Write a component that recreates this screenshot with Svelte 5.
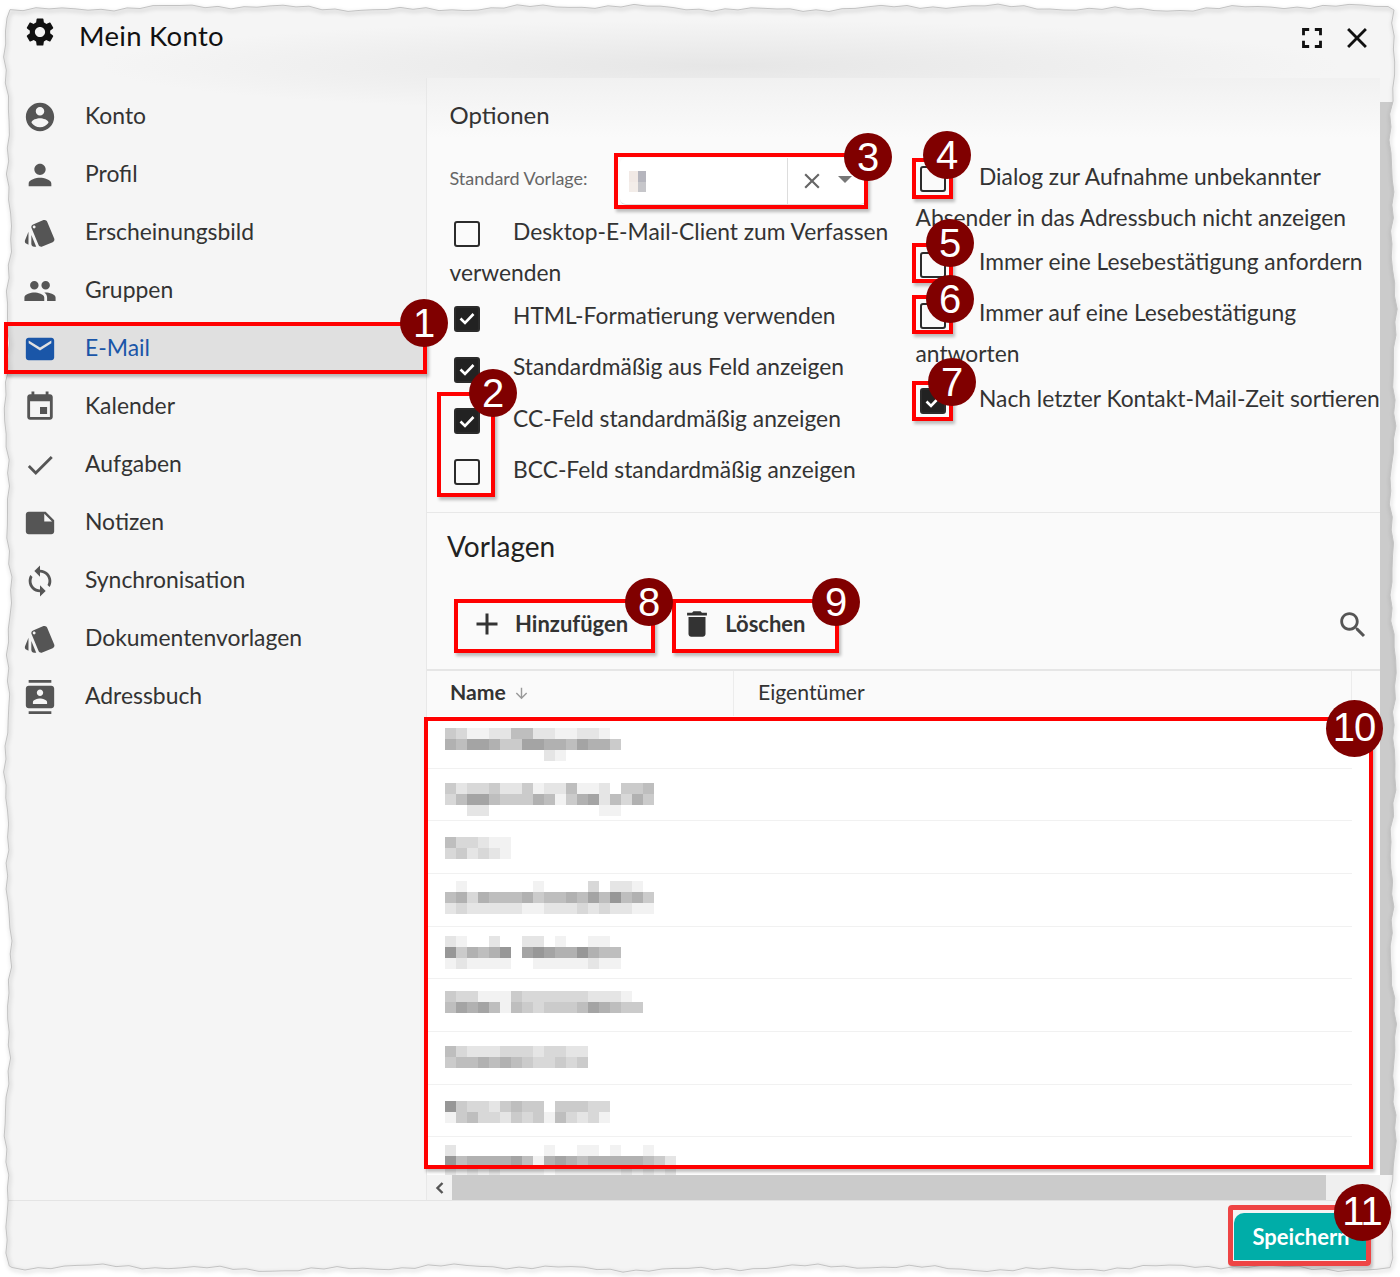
<script>
  const icons = {
    gear: 'M19.14 12.94c.04-.3.06-.61.06-.94 0-.32-.02-.64-.07-.94l2.03-1.58a.49.49 0 0 0 .12-.61l-1.92-3.32a.488.488 0 0 0-.59-.22l-2.39.96c-.5-.38-1.03-.7-1.62-.94l-.36-2.54a.484.484 0 0 0-.48-.41h-3.84c-.24 0-.43.17-.47.41l-.36 2.54c-.59.24-1.13.57-1.62.94l-2.39-.96c-.22-.08-.47 0-.59.22L2.74 8.87c-.12.21-.08.47.12.61l2.03 1.58c-.05.3-.09.63-.09.94s.02.64.07.94l-2.03 1.58a.49.49 0 0 0-.12.61l1.92 3.32c.12.22.37.29.59.22l2.39-.96c.5.38 1.03.7 1.62.94l.36 2.54c.05.24.24.41.48.41h3.84c.24 0 .44-.17.47-.41l.36-2.54c.59-.24 1.13-.56 1.62-.94l2.39.96c.22.08.47 0 .59-.22l1.92-3.32c.12-.22.07-.47-.12-.61l-2.01-1.58zM12 15.6c-1.98 0-3.6-1.62-3.6-3.6s1.62-3.6 3.6-3.6 3.6 1.62 3.6 3.6-1.62 3.6-3.6 3.6z',
    account: 'M12 2C6.48 2 2 6.48 2 12s4.48 10 10 10 10-4.48 10-10S17.52 2 12 2zm0 3c1.66 0 3 1.34 3 3s-1.34 3-3 3-3-1.34-3-3 1.34-3 3-3zm0 14.2c-2.5 0-4.71-1.28-6-3.22.03-1.99 4-3.08 6-3.08 1.99 0 5.97 1.09 6 3.08-1.29 1.94-3.5 3.22-6 3.22z',
    person: 'M12 12c2.21 0 4-1.79 4-4s-1.79-4-4-4-4 1.79-4 4 1.79 4 4 4zm0 2c-2.67 0-8 1.34-8 4v2h16v-2c0-2.66-5.33-4-8-4z',
    style: 'M2.53 19.65l1.34.56v-9.03l-2.43 5.86c-.41 1.02.08 2.19 1.09 2.61zm19.5-3.7L17.07 3.98c-.31-.75-1.04-1.21-1.81-1.23-.26 0-.53.04-.79.15L7.1 5.95c-.75.31-1.21 1.03-1.23 1.8-.01.27.04.54.15.8l4.96 11.97c.31.76 1.05 1.22 1.83 1.23.26 0 .52-.05.77-.15l7.36-3.05c1.02-.42 1.51-1.59 1.09-2.6zM7.88 8.75c-.55 0-1-.45-1-1s.45-1 1-1 1 .45 1 1-.45 1-1 1zm-2 11c0 1.1.9 2 2 2h1.45l-3.45-8.34v6.34z',
    group: 'M16 11c1.66 0 2.99-1.34 2.99-3S17.66 5 16 5c-1.66 0-3 1.34-3 3s1.34 3 3 3zm-8 0c1.66 0 2.99-1.34 2.99-3S9.66 5 8 5C6.34 5 5 6.34 5 8s1.34 3 3 3zm0 2c-2.33 0-7 1.17-7 3.5V19h14v-2.5c0-2.33-4.67-3.5-7-3.5zm8 0c-.29 0-.62.02-.97.05 1.16.84 1.97 1.97 1.97 3.45V19h6v-2.5c0-2.33-4.67-3.5-7-3.5z',
    email: 'M20 4H4c-1.1 0-1.99.9-1.99 2L2 18c0 1.1.9 2 2 2h16c1.1 0 2-.9 2-2V6c0-1.1-.9-2-2-2zm0 4l-8 5-8-5V6l8 5 8-5v2z',
    event: 'M17 12h-5v5h5v-5zM16 1v2H8V1H6v2H5c-1.11 0-1.99.9-1.99 2L3 19c0 1.1.89 2 2 2h14c1.1 0 2-.9 2-2V5c0-1.1-.9-2-2-2h-1V1h-2zm3 18H5V8h14v11z',
    check: 'M9 16.17L4.83 12l-1.42 1.41L9 19 21 7l-1.41-1.41z',
    note: 'M22 10l-6-6H4c-1.1 0-2 .9-2 2v12.01c0 1.1.9 1.99 2 1.99l16-.01c1.1 0 2-.89 2-1.99v-8zm-7-4.5l5.5 5.5H15V5.5z',
    sync: 'M12 4V1L8 5l4 4V6c3.31 0 6 2.69 6 6 0 1.01-.25 1.97-.7 2.8l1.46 1.46C19.54 15.03 20 13.57 20 12c0-4.42-3.58-8-8-8zm0 14c-3.31 0-6-2.69-6-6 0-1.01.25-1.97.7-2.8L5.24 7.74C4.46 8.97 4 10.43 4 12c0 4.42 3.58 8 8 8v3l4-4-4-4v3z',
    contacts: 'M20 0H4v2h16V0zM4 24h16v-2H4v2zM20 4H4c-1.1 0-2 .9-2 2v12c0 1.1.9 2 2 2h16c1.1 0 2-.9 2-2V6c0-1.1-.9-2-2-2zm-8 2.75c1.24 0 2.25 1.01 2.25 2.25s-1.01 2.25-2.25 2.25S9.75 10.24 9.75 9 10.76 6.75 12 6.75zM17 17H7v-1.5c0-1.67 3.33-2.5 5-2.5s5 .83 5 2.5V17z',
    fullscreen: 'M7 14H5v5h5v-2H7v-3zm-2-4h2V7h3V5H5v5zm12 7h-3v2h5v-5h-2v3zM14 5v2h3v3h2V5h-5z',
    close: 'M19 6.41L17.59 5 12 10.59 6.41 5 5 6.41 10.59 12 5 17.59 6.41 19 12 13.41 17.59 19 19 17.59 13.41 12z',
    plus: 'M19 13h-6v6h-2v-6H5v-2h6V5h2v6h6v2z',
    trash: 'M6 19c0 1.1.9 2 2 2h8c1.1 0 2-.9 2-2V7H6v12zM19 4h-3.5l-1-1h-5l-1 1H5v2h14V4z',
    search: 'M15.5 14h-.79l-.28-.27C15.41 12.59 16 11.11 16 9.5 16 5.91 13.09 3 9.5 3S3 5.91 3 9.5 5.91 16 9.5 16c1.61 0 3.09-.59 4.23-1.57l.27.28v.79l5 4.99L20.49 19l-4.99-5zm-6 0C7.01 14 5 11.99 5 9.5S7.01 5 9.5 5 14 7.01 14 9.5 11.99 14 9.5 14z',
    down: 'M20 12l-1.41-1.41L13 16.17V4h-2v12.17l-5.58-5.59L4 12l8 8 8-8z'
  };

  const navItems = [
    { label: 'Konto', icon: 'account' },
    { label: 'Profil', icon: 'person' },
    { label: 'Erscheinungsbild', icon: 'style' },
    { label: 'Gruppen', icon: 'group' },
    { label: 'E-Mail', icon: 'email', active: true },
    { label: 'Kalender', icon: 'event' },
    { label: 'Aufgaben', icon: 'check' },
    { label: 'Notizen', icon: 'note' },
    { label: 'Synchronisation', icon: 'sync' },
    { label: 'Dokumentenvorlagen', icon: 'style' },
    { label: 'Adressbuch', icon: 'contacts' }
  ];

  const leftOptions = [
    { label: 'Desktop-E-Mail-Client zum Verfassen verwenden', wrapped: true },
    { label: 'HTML-Formatierung verwenden', on: true },
    { label: 'Standardmäßig aus Feld anzeigen', on: true },
    { label: 'CC-Feld standardmäßig anzeigen', on: true },
    { label: 'BCC-Feld standardmäßig anzeigen' }
  ];

  const rightOptions = [
    { label: 'Dialog zur Aufnahme unbekannter Absender in das Adressbuch nicht anzeigen', wrapped: true },
    { label: 'Immer eine Lesebestätigung anfordern' },
    { label: 'Immer auf eine Lesebestätigung antworten', wrapped: true },
    { label: 'Nach letzter Kontakt-Mail-Zeit sortieren', on: true }
  ];

  // blurred template names: offset from row top, then lines of gray levels
  const blurRows = [
    { top: 12, lines: ['4311225522112210', '6577644776657664', '0000000002100000'] },
    { top: 14, lines: ['4233422412251120445', '3577544465146725364', '0022000000000011000'] },
    { top: 16, lines: ['533211', '342321'] },
    { top: 7, lines: ['0100000010000302210', '5636555645565758564', '2322222112223232211'] },
    { top: 9, lines: ['2100200220100110', '8465680787668655', '1211110011111211'] },
    { top: 12, lines: ['433111433333322210', '576751543444576544'] },
    { top: 14, lines: ['5322233323322', '4556565433434'] },
    { top: 16, lines: ['843324544044433', '145332434153231'] },
    { top: 8, lines: ['2000000001001101001000', '8566667516765666665420', '2121211110111111212120'] }
  ];

  const grayOf = (c) => {
    const d = Number(c);
    if (d === 0) return 'transparent';
    const g = 255 - d * 13;
    return `rgb(${g},${g},${g})`;
  };

  const marks = [
    { l: 4, t: 322, w: 423, h: 52 },
    { l: 437, t: 392, w: 58, h: 105 },
    { l: 614, t: 153, w: 254, h: 56 },
    { l: 912, t: 158, w: 41, h: 41 },
    { l: 912, t: 243, w: 41, h: 40 },
    { l: 912, t: 295, w: 41, h: 39 },
    { l: 912, t: 381, w: 41, h: 40 },
    { l: 454, t: 599, w: 201, h: 54 },
    { l: 672, t: 599, w: 167, h: 54 },
    { l: 424, t: 717, w: 949, h: 452 }
  ];

  const badges = [
    { n: 1, x: 424, y: 323 },
    { n: 2, x: 493, y: 393 },
    { n: 3, x: 868, y: 157 },
    { n: 4, x: 947, y: 155 },
    { n: 5, x: 950, y: 243 },
    { n: 6, x: 950, y: 299 },
    { n: 7, x: 952, y: 382 },
    { n: 8, x: 649, y: 602 },
    { n: 9, x: 836, y: 602 },
    { n: 10, x: 1354, y: 728, big: true },
    { n: 11, x: 1362, y: 1212, big: true }
  ];

  // torn paper outline, built from a few sines so it stays the same on each run
  const wob = (i, s) =>
    Math.sin(i * 0.017 + s) * 1.8 + Math.sin(i * 0.053 + s * 2) * 1.6 + Math.sin(i * 0.21 + s * 3) * 1.1;

  function tornPath() {
    const pts = [];
    for (let x = 10; x < 1390; x += 13) pts.push([x, 8 + wob(x, 1)]);
    for (let y = 10; y < 1266; y += 13) pts.push([1393 + wob(y, 2), y]);
    for (let x = 1390; x > 10; x -= 13) pts.push([x, 1268 + wob(x, 3)]);
    for (let y = 1266; y > 10; y -= 13) pts.push([8 + wob(y, 4), y]);
    return 'M' + pts.map((p) => `${p[0].toFixed(1)} ${p[1].toFixed(1)}`).join('L') + 'Z';
  }
  const torn = tornPath();
</script>

{#snippet icon(name, size)}
  <svg class="icon" width={size} height={size} viewBox="0 0 24 24" aria-hidden="true"><path d={icons[name]} /></svg>
{/snippet}

{#snippet option(item)}
  <div class="opt" class:wrapped={item.wrapped}>
    <span class="box" class:on={item.on}>
      {#if item.on}
        <svg width="26" height="26" viewBox="0 0 26 26"><path d="M6.5 13.5l4.5 4.5 8.5-9" fill="none" stroke="#fff" stroke-width="2.6" /></svg>
      {/if}
    </span>{item.label}
  </div>
{/snippet}

<div class="window">
  <header class="titlebar">
    <span class="gear">{@render icon('gear', 34)}</span>
    <h1>Mein Konto</h1>
    <div class="actions">
      {@render icon('fullscreen', 34)}
      {@render icon('close', 34)}
    </div>
  </header>

  <div class="body">
    <nav>
      {#each navItems as item}
        <div class="nav-item" class:active={item.active}>
          <span class="nav-icon">{@render icon(item.icon, 34)}</span>
          <span class="nav-label">{item.label}</span>
        </div>
      {/each}
    </nav>

    <main>
      <section class="options">
        <div class="col-left">
          <h2>Optionen</h2>
          <div class="select-row">
            <span class="select-label">Standard Vorlage:</span>
            <div class="select">
              <div class="select-value">
                <span class="px" style="background:#f1e9e5"></span>
                <span class="px" style="background:#b5b5bd"></span>
                <span class="px" style="background:#f3ede9"></span>
                <span class="px" style="background:#c6c6ca"></span>
              </div>
              <div class="select-tools">
                <svg class="clear" width="26" height="26" viewBox="0 0 24 24"><path d={icons.close} /></svg>
                <span class="caret"></span>
              </div>
            </div>
          </div>
          {#each leftOptions as item}
            {@render option(item)}
          {/each}
        </div>
        <div class="col-right">
          {#each rightOptions as item}
            {@render option(item)}
          {/each}
        </div>
      </section>

      <section class="templates">
        <h2 class="templates-title">Vorlagen</h2>
        <div class="toolbar">
          <button class="tool add">{@render icon('plus', 36)}Hinzufügen</button>
          <button class="tool del">{@render icon('trash', 34)}Löschen</button>
          <span class="search">{@render icon('search', 34)}</span>
        </div>
        <div class="thead">
          <div class="th name">Name <span class="sort">{@render icon('down', 17)}</span></div>
          <div class="th owner">Eigentümer</div>
          <div class="th spacer"></div>
        </div>
        <div class="tbody">
          {#each blurRows as row}
            <div class="trow" style="padding-top:{row.top}px">
              {#each row.lines as line}
                <div class="blur-line">
                  {#each line.split('') as c}
                    <span class="cell" style="background:{grayOf(c)}"></span>
                  {/each}
                </div>
              {/each}
            </div>
          {/each}
        </div>
        <div class="hscroll">
          <span class="hs-btn">
            <svg width="14" height="14" viewBox="0 0 14 14"><path d="M9.5 2L4.5 7l5 5" fill="none" stroke="#555" stroke-width="2.4" /></svg>
          </span>
          <span class="hs-thumb"></span>
        </div>
      </section>
    </main>

    <div class="vscroll">
      <span class="vs-btn"></span>
      <span class="vs-thumb"></span>
    </div>
  </div>

  <footer>
    <button class="save">Speichern</button>
  </footer>

  <svg class="paper" width="1400" height="1277" viewBox="0 0 1400 1277" aria-hidden="true">
    <path d="M0 0H1400V1277H0Z {torn}" fill="#fff" fill-rule="evenodd" />
    <path class="edge" d={torn} fill="none" stroke="#c2c2c2" stroke-width="1" />
  </svg>

  <div class="save-mark"></div>

  {#each marks as m}
    <div class="mark" style="left:{m.l}px;top:{m.t}px;width:{m.w}px;height:{m.h}px"></div>
  {/each}
  {#each badges as b}
    <div class="badge" class:big={b.big} style="left:{b.x}px;top:{b.y}px">{b.n}</div>
  {/each}
</div>

<style>
  :global(body) {
    background: #fff;
  }

  .window {
    position: relative;
    width: 1400px;
    height: 1277px;
    overflow: hidden;
    display: flex;
    flex-direction: column;
    font-family: Lato, 'Open Sans', sans-serif;
    color: #333;
    background:
      radial-gradient(ellipse 620px 46px at 720px 66px, #e6e6e6, transparent),
      #f5f5f5;
  }

  .icon path {
    fill: currentColor;
  }

  /* --- Title bar --- */
  .titlebar {
    height: 78px;
    flex: none;
    display: flex;
    align-items: center;
    padding: 0 26px 6px 23px;
    box-sizing: border-box;
    color: #111;
  }

  .gear {
    display: flex;
    margin-top: -8px;
  }

  h1 {
    margin: 0 0 0 22px;
    font-size: 27.5px;
    font-weight: 400;
    letter-spacing: 0.3px;
    position: relative;
    top: -1px;
  }

  .actions {
    margin-left: auto;
    display: flex;
    gap: 11px;
    margin-top: 4px;
  }

  /* --- Layout --- */
  .body {
    flex: 1;
    display: flex;
    min-height: 0;
  }

  nav {
    width: 427px;
    flex: none;
    padding-top: 9px;
    box-sizing: border-box;
    border-right: 1px solid #e8e8e8;
  }

  .nav-item {
    height: 58px;
    display: flex;
    align-items: center;
    font-size: 22.9px;
    color: #333;
  }

  .nav-label {
    padding-bottom: 2px;
  }

  .nav-item.active {
    background: linear-gradient(#e0e0e0, #e0e0e0) center / 100% 46px no-repeat;
    color: #1a56a8;
  }

  .nav-icon {
    display: flex;
    width: 85px;
    padding: 2px 0 0 23px;
    box-sizing: border-box;
    color: #555;
  }

  .active .nav-icon {
    color: #1a56a8;
  }

  main {
    width: 953px;
    flex: none;
    display: flex;
    flex-direction: column;
    background: linear-gradient(#f1f1f1, #fafafa 60px);
  }

  /* --- Options --- */
  .options {
    height: 435px;
    flex: none;
    box-sizing: border-box;
    display: flex;
    padding-left: 22.5px;
    border-bottom: 1px solid #e8e8e8;
  }

  .col-left {
    width: 466px;
    flex: none;
  }

  .col-left h2 {
    margin: 0;
    height: 76px;
    line-height: 74px;
    font-size: 24px;
    font-weight: 400;
  }

  .select-row {
    display: flex;
    align-items: center;
    margin-top: 4px;
    margin-bottom: 5.5px;
    height: 47px;
  }

  .select-label {
    width: 170.5px;
    flex: none;
    font-size: 18px;
    color: #666;
    margin-top: -7px;
  }

  .select {
    width: 246px;
    height: 47px;
    display: flex;
    background: #fff;
    border-radius: 6px;
    box-sizing: border-box;
    border-bottom: 1px solid #ddd;
  }

  .select-value {
    width: 168px;
    padding: 13px 0 0 9px;
    box-sizing: border-box;
    display: grid;
    grid-template-columns: 8.5px 8.5px;
    grid-auto-rows: 10.5px;
    border-right: 1px solid #ddd;
  }

  .select-tools {
    flex: 1;
    display: flex;
    align-items: center;
    padding-left: 11px;
    color: #666;
  }

  .clear path {
    fill: #666;
  }

  .caret {
    margin: -4px 0 0 13px;
    border-left: 7px solid transparent;
    border-right: 7px solid transparent;
    border-top: 7px solid #777;
  }

  .col-right {
    padding-top: 77.5px;
    width: 468px;
    flex: none;
  }

  .opt {
    font-size: 22.8px;
    line-height: 41px;
    margin-bottom: 10.3px;
    color: #333;
  }

  .opt.wrapped {
    margin-bottom: 2.5px;
  }

  .col-right .opt.wrapped {
    margin-bottom: 3.5px;
  }

  .col-left .opt {
    width: 445px;
  }

  .box {
    display: inline-block;
    vertical-align: -7px;
    width: 26px;
    height: 26px;
    box-sizing: border-box;
    border: 2.5px solid #2b2b2b;
    border-radius: 3px;
    margin: 0 33px 0 4.5px;
    position: relative;
    top: 0.5px;
  }

  .box.on {
    background: #222;
  }

  .box svg {
    position: absolute;
    left: -2.5px;
    top: -2.5px;
  }

  /* --- Templates --- */
  .templates {
    flex: 1;
    display: flex;
    flex-direction: column;
    min-height: 0;
  }

  .templates-title {
    margin: 0;
    height: 67px;
    line-height: 67px;
    padding-left: 20px;
    font-size: 28px;
    font-weight: 400;
    color: #222;
    flex: none;
  }

  .toolbar {
    height: 91px;
    flex: none;
    display: flex;
    align-items: center;
    padding: 0 10px 0 42px;
    box-sizing: border-box;
    border-bottom: 2px solid #e6e6e6;
  }

  .tool {
    display: flex;
    align-items: center;
    gap: 10px;
    padding: 0 0 2px;
    border: none;
    background: none;
    font: 700 22px Lato, sans-serif;
    color: #333;
  }

  .add {
    margin-right: 52px;
  }

  .del {
    gap: 11px;
  }

  .search {
    display: flex;
    margin-left: auto;
    color: #555;
  }

  .thead {
    height: 45px;
    flex: none;
    display: flex;
    align-items: center;
    font-size: 21.2px;
  }

  .th {
    height: 100%;
    display: flex;
    align-items: center;
    box-sizing: border-box;
    border-right: 1px solid #ececec;
    padding-bottom: 3px;
  }

  .name {
    width: 307px;
    padding-left: 23px;
    font-weight: 700;
  }

  .sort {
    display: flex;
    margin: 3px 0 0 7px;
    color: #999;
  }

  .owner {
    width: 618px;
    padding-left: 24px;
  }

  .spacer {
    border: none;
    flex: 1;
  }

  .tbody {
    flex: 1;
    min-height: 0;
    overflow: hidden;
    background: #fff;
    padding-right: 28px;
  }

  .trow {
    height: 52.67px;
    box-sizing: border-box;
    padding-left: 18px;
    border-bottom: 1px solid #f1f1f1;
  }

  .blur-line {
    display: flex;
    height: 11px;
  }

  .cell {
    width: 11px;
    height: 11px;
    flex: none;
  }

  .hscroll {
    height: 25px;
    flex: none;
    display: flex;
    background: #efefef;
  }

  .hs-btn {
    width: 25px;
    display: flex;
    align-items: center;
    justify-content: center;
    background: #f3f3f3;
  }

  .hs-thumb {
    width: 874px;
    background: #cbcbcb;
  }

  .vscroll {
    flex: 1;
    display: flex;
    flex-direction: column;
  }

  .vs-btn {
    height: 24px;
    background: #f5f5f5;
  }

  .vs-thumb {
    height: 1073px;
    background: #cbcbcb;
  }

  /* --- Footer --- */
  footer {
    height: 77px;
    flex: none;
    box-sizing: border-box;
    border-top: 1px solid #e4e4e4;
    background: #f4f4f4;
    display: flex;
    justify-content: flex-end;
    padding: 12px 34px 0 0;
  }

  .save {
    width: 132px;
    height: 47px;
    padding: 0 0 0 2px;
    border: none;
    border-radius: 10px 0 0 0;
    background: #00ada8;
    color: #fff;
    font: 700 22px Lato, sans-serif;
  }

  /* --- Overlays --- */
  .paper {
    position: absolute;
    left: 0;
    top: 0;
  }

  .edge {
    filter: drop-shadow(1px 2px 2px rgba(0, 0, 0, 0.35));
  }

  .mark {
    position: absolute;
    box-sizing: border-box;
    border: 4px solid #f00;
    box-shadow: 2px 3px 3px rgba(0, 0, 0, 0.25);
  }

  .save-mark {
    position: absolute;
    left: 1228px;
    top: 1205px;
    width: 143px;
    height: 61px;
    box-sizing: border-box;
    border: 5px solid #ee4444;
    border-radius: 4px;
    box-shadow: 2px 3px 3px rgba(0, 0, 0, 0.2);
  }

  .badge {
    position: absolute;
    width: 48px;
    height: 48px;
    margin: -24px 0 0 -24px;
    border-radius: 50%;
    background: #800000;
    color: #fff;
    font: 400 40px/48px 'Liberation Sans', sans-serif;
    text-align: center;
  }

  .badge.big {
    width: 57px;
    height: 57px;
    margin: -28.5px 0 0 -28.5px;
    line-height: 55px;
    letter-spacing: -1px;
  }
</style>
